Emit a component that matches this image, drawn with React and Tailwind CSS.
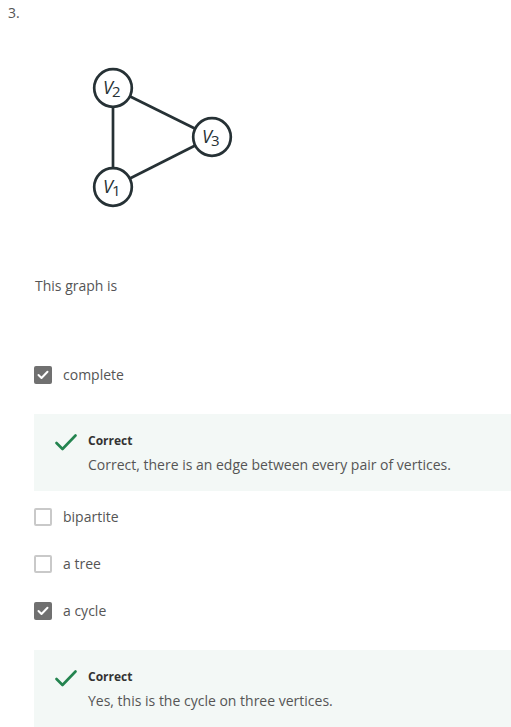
import React from "react";

const Check = () => (
  <svg width="22" height="17" viewBox="0 0 22 17" className="block">
    <path d="M1.5 9 L7.5 15 L20.5 1.5" fill="none" stroke="#23844f" strokeWidth="2.6" strokeLinecap="round" strokeLinejoin="round" />
  </svg>
);

const Box = ({ checked }) =>
  checked ? (
    <div className="w-[18px] h-[18px] rounded-[2px] bg-[#707070] flex items-center justify-center shrink-0">
      <svg width="12" height="10" viewBox="0 0 12 10">
        <path d="M1.5 5 L4.5 8 L10.5 1.8" fill="none" stroke="#fff" strokeWidth="2" strokeLinecap="round" strokeLinejoin="round" />
      </svg>
    </div>
  ) : (
    <div className="w-[18px] h-[18px] rounded-[2px] border-2 border-[#c9c9c9] bg-white shrink-0" />
  );

const Option = ({ checked, label }) => (
  <div className="flex items-center h-[18px] pl-[34px]">
    <Box checked={checked} />
    <span className="ml-[11px] text-[14px] leading-[18px] text-[#555] -mt-[1px]">{label}</span>
  </div>
);

const Feedback = ({ text }) => (
  <div className="ml-[34px] h-[77px] bg-[#f3f8f6] flex pt-[19px]">
    <div className="w-[54px] pl-[21px] pt-[1px] shrink-0">
      <Check />
    </div>
    <div>
      <div className="text-[12px] leading-[15px] font-bold text-[#333]">Correct</div>
      <div className="mt-[7px] text-[14px] leading-[20px] text-[#555]">{text}</div>
    </div>
  </div>
);

const Node = ({ cx, cy, sub }) => (
  <g>
    <circle cx={cx} cy={cy} r="18.8" fill="#fff" stroke="#263135" strokeWidth="2.7" />
    <text x={cx - 10} y={cy + 6} fontFamily="'Open Sans', sans-serif" fontSize="18" fill="#263135">
      <tspan fontStyle="italic">V</tspan>
      <tspan fontSize="15" dy="3" dx="-1">{sub}</tspan>
    </text>
  </g>
);

export default function App() {
  return (
    <div className="bg-white w-[511px] h-[727px] overflow-hidden" style={{ fontFamily: "'Open Sans', sans-serif" }}>
      <div className="pl-[8px] pt-[3px] text-[14px] leading-[20px] text-[#555]">3.</div>
      <div className="mt-[37px] ml-[85px] w-[160px] h-[160px]">
        <svg width="160" height="160" viewBox="0 0 160 160" className="block">
          <line x1="28" y1="28" x2="28" y2="127" stroke="#263135" strokeWidth="2.7" />
          <line x1="28" y1="28" x2="127" y2="77" stroke="#263135" strokeWidth="2.7" />
          <line x1="28" y1="127" x2="127" y2="77" stroke="#263135" strokeWidth="2.7" />
          <Node cx={28} cy={28} sub="2" />
          <Node cx={127} cy={77} sub="3" />
          <Node cx={28} cy={127} sub="1" />
        </svg>
      </div>
      <div className="mt-[56px] pl-[35px] text-[14px] leading-[20px] text-[#555]">This graph is</div>
      <div className="mt-[70px]">
        <Option checked label="complete" />
      </div>
      <div className="mt-[30px]">
        <Feedback text="Correct, there is an edge between every pair of vertices." />
      </div>
      <div className="mt-[17px] flex flex-col gap-[29px]">
        <Option label="bipartite" />
        <Option label="a tree" />
        <Option checked label="a cycle" />
      </div>
      <div className="mt-[30px]">
        <Feedback text="Yes, this is the cycle on three vertices." />
      </div>
    </div>
  );
}
